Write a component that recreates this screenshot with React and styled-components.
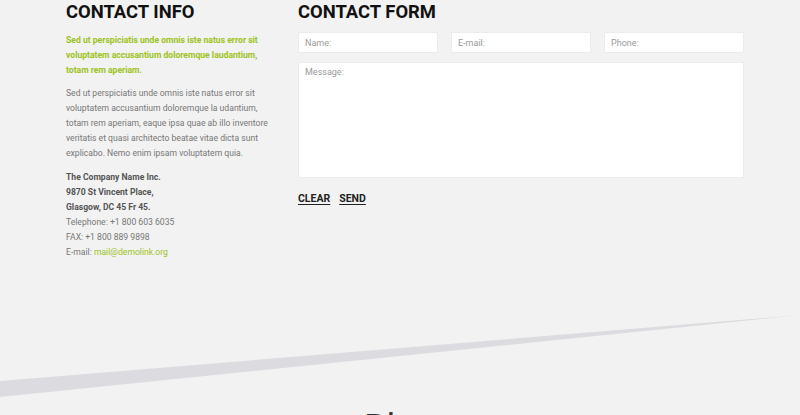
import React from "react";
import styled, { createGlobalStyle } from "styled-components";

const GlobalStyle = createGlobalStyle`
  html, body {
    margin: 0;
    padding: 0;
    background: #f2f2f2;
    font-family: Roboto, "Liberation Sans", Arial, sans-serif;
  }
`;

const Page = styled.div`
  width: 800px;
  overflow: hidden;
`;

const Contact = styled.section`
  display: grid;
  grid-template-columns: 210px 446px;
  column-gap: 22px;
  padding: 1px 0 0 66px;
  height: 309px;
  box-sizing: border-box;
`;

const Heading = styled.h2`
  margin: 0;
  font-size: 18.4px;
  line-height: 22px;
  font-weight: 700;
  color: #111;
`;

const Lead = styled.p`
  margin: 10px 0 0;
  font-size: 8.6px;
  line-height: 15px;
  font-weight: 700;
  color: #9cc21a;
`;

const Text = styled.p`
  margin: 8px 0 0;
  font-size: 8.6px;
  line-height: 15px;
  color: #777;
`;

const Address = styled.address`
  margin-top: 9px;
  font-style: normal;
  font-size: 8.6px;
  line-height: 15px;
  color: #777;

  strong {
    display: block;
    color: #555;
  }

  a {
    color: #9cc21a;
    text-decoration: none;
  }
`;

const Form = styled.form`
  margin-top: 9px;
  display: flex;
  flex-direction: column;
`;

const FieldRow = styled.div`
  display: grid;
  grid-template-columns: repeat(3, 1fr);
  column-gap: 13px;
`;

const Field = styled.input`
  height: 21px;
  box-sizing: border-box;
  border: 1px solid #ececec;
  background: #fff;
  padding: 0 6px;
  font-family: inherit;
  font-size: 9px;
  color: #555;
  outline: none;

  &::placeholder {
    color: #9a9a9a;
  }
`;

const Message = styled.textarea`
  margin-top: 9px;
  height: 116px;
  box-sizing: border-box;
  border: 1px solid #ececec;
  background: #fff;
  padding: 4px 6px;
  font-family: inherit;
  font-size: 9px;
  resize: none;
  outline: none;

  &::placeholder {
    color: #9a9a9a;
  }
`;

const Actions = styled.div`
  display: flex;
  gap: 9px;
  margin-top: 14px;
`;

const LinkButton = styled.button`
  border: none;
  background: none;
  padding: 0;
  font-family: inherit;
  font-size: 10.5px;
  font-weight: 700;
  color: #222;
  text-decoration: underline;
  text-underline-offset: 2px;
  cursor: pointer;
`;

const Divider = styled.svg`
  display: block;
  width: 800px;
  height: 90px;
`;

const SectionTitle = styled.h2`
  margin: 8px 0 0;
  text-align: center;
  font-size: 36px;
  line-height: 43px;
  font-weight: 400;
  color: #333;
`;

function App() {
  return (
    <Page>
      <GlobalStyle />
      <Contact>
        <div>
          <Heading>CONTACT INFO</Heading>
          <Lead>
            Sed ut perspiciatis unde omnis iste natus error sit voluptatem
            accusantium doloremque laudantium, totam rem aperiam.
          </Lead>
          <Text>
            Sed ut perspiciatis unde omnis iste natus error sit voluptatem
            accusantium doloremque la udantium, totam rem aperiam, eaque ipsa
            quae ab illo inventore veritatis et quasi architecto beatae vitae
            dicta sunt explicabo. Nemo enim ipsam voluptatem quia.
          </Text>
          <Address>
            <strong>The Company Name Inc.</strong>
            <strong>9870 St Vincent Place,</strong>
            <strong>Glasgow, DC 45 Fr 45.</strong>
            Telephone: +1 800 603 6035
            <br />
            FAX: +1 800 889 9898
            <br />
            E-mail: <a href="#">mail@demolink.org</a>
          </Address>
        </div>
        <div>
          <Heading>CONTACT FORM</Heading>
          <Form onSubmit={(e) => e.preventDefault()}>
            <FieldRow>
              <Field placeholder="Name:" />
              <Field placeholder="E-mail:" />
              <Field placeholder="Phone:" />
            </FieldRow>
            <Message placeholder="Message:" />
            <Actions>
              <LinkButton type="reset">CLEAR</LinkButton>
              <LinkButton type="submit">SEND</LinkButton>
            </Actions>
          </Form>
        </div>
      </Contact>
      <Divider viewBox="0 0 800 90" preserveAspectRatio="none">
        <polygon points="0,72 800,6 0,88" fill="#dcdce0" />
      </Divider>
      <SectionTitle>Blog</SectionTitle>
    </Page>
  );
}

export default App;
